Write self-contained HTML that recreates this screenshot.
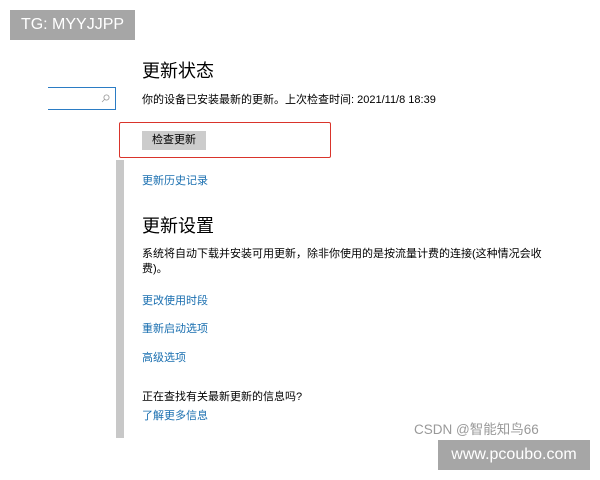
<!DOCTYPE html>
<html><head><meta charset="utf-8"><style>
body{margin:0;width:600px;height:480px;background:#fff;position:relative;overflow:hidden;font-family:"Liberation Sans","Noto Sans CJK SC",sans-serif;color:#000}
.a{position:absolute;white-space:nowrap}
.l{color:#1a6fb0;font-size:11px}
.t{font-size:11px}
.h{font-size:18px}
</style></head><body>
<div class="a" style="left:10px;top:10px;width:125px;height:30px;background:#a6a6a6;color:#fff;font-size:16px;line-height:30px;text-align:center">TG: MYYJJPP</div>
<div class="a" style="left:48px;top:87px;width:67px;height:21px;border:1.5px solid #2b7cc4;border-left:none"></div>
<svg class="a" style="left:101px;top:94px" width="9" height="9" viewBox="0 0 9 9"><circle cx="5.5" cy="3.5" r="2.6" fill="none" stroke="#999" stroke-width="0.8"/><path d="M3.6 5.4L1 8" stroke="#999" stroke-width="0.8"/></svg>
<div class="a" style="left:116px;top:160px;width:8px;height:278px;background:#c8c8c8"></div>
<div class="a" style="left:119px;top:122px;width:210px;height:34px;border:1.5px solid #d9342b;border-radius:2px"></div>
<div class="a" style="left:142px;top:131px;width:64px;height:19px;background:#cccccc;font-size:11px;line-height:19px;text-align:center">检查更新</div>
<div class="a h" style="left:142px;top:57px">更新状态</div>
<div class="a t" style="left:142px;top:91px">你的设备已安装最新的更新。上次检查时间: 2021/11/8 18:39</div>
<div class="a l" style="left:142px;top:172px">更新历史记录</div>
<div class="a h" style="left:142px;top:212px">更新设置</div>
<div class="a t" style="left:142px;top:247px;line-height:15px">系统将自动下载并安装可用更新，除非你使用的是按流量计费的连接(这种情况会收<br>费)。</div>
<div class="a l" style="left:142px;top:292px">更改使用时段</div>
<div class="a l" style="left:142px;top:320px">重新启动选项</div>
<div class="a l" style="left:142px;top:349px">高级选项</div>
<div class="a t" style="left:142px;top:388px">正在查找有关最新更新的信息吗?</div>
<div class="a l" style="left:142px;top:407px">了解更多信息</div>
<div class="a" style="left:414px;top:418px;color:#999;font-size:13.5px">CSDN @智能知鸟66</div>
<div class="a" style="left:438px;top:440px;width:152px;height:30px;background:#a6a6a6;color:#fff;font-size:16px;line-height:30px;text-align:center">www.pcoubo.com</div>
</body></html>
